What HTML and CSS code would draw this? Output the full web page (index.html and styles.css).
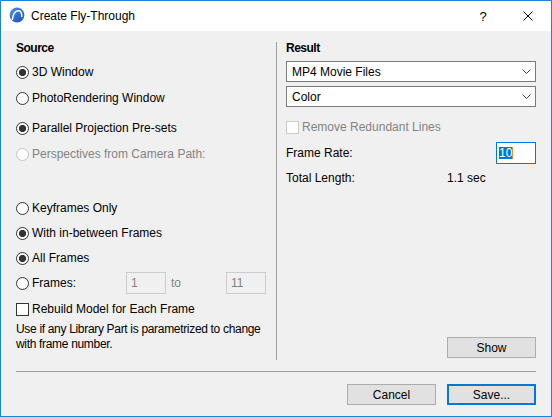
FILE: index.html
```html
<!DOCTYPE html>
<html lang="en">
<head>
<meta charset="utf-8">
<title>Create Fly-Through</title>
<link rel="stylesheet" href="styles.css">
</head>
<body>
<div class="window">
  <div class="titlebar">
    <svg class="app-icon" viewBox="0 0 16 16" width="16" height="16">
      <defs>
        <linearGradient id="g" x1="0" y1="0" x2="1" y2="1">
          <stop offset="0" stop-color="#4a93ea"/>
          <stop offset="1" stop-color="#1a4fb4"/>
        </linearGradient>
      </defs>
      <circle cx="8" cy="8" r="7.4" fill="url(#g)"/>
      <path d="M3.4 12.4 C4 7.2 6.4 4 9.4 3.8 C11.8 3.7 13 6 12.8 9.6" fill="none" stroke="#fff" stroke-width="1.5" stroke-linecap="round"/>
    </svg>
    <span class="title">Create Fly-Through</span>
    <span class="cap-btn help">?</span>
    <span class="cap-btn close">
      <svg viewBox="0 0 10 10" width="10" height="10"><path d="M0.5 0.5 L9.5 9.5 M9.5 0.5 L0.5 9.5" stroke="#000" stroke-width="1" fill="none"/></svg>
    </span>
  </div>

  <div class="body">
    <div class="panes">
      <div class="pane">
        <div class="group-title">Source</div>
        <div class="opt src-first"><span class="radio on"></span>3D Window</div>
        <div class="opt src-next"><span class="radio"></span>PhotoRendering Window</div>
        <div class="opt view-first"><span class="radio on"></span>Parallel Projection Pre-sets</div>
        <div class="opt src-next disabled"><span class="radio"></span>Perspectives from Camera Path:</div>
        <div class="opt frames-first"><span class="radio"></span>Keyframes Only</div>
        <div class="opt frames-next"><span class="radio on"></span>With in-between Frames</div>
        <div class="opt frames-next"><span class="radio on"></span>All Frames</div>
        <div class="opt range-row">
          <span class="range-label"><span class="radio"></span>Frames:</span>
          <span class="field disabled-field">1</span>
          <span class="to">to</span>
          <span class="field disabled-field">11</span>
        </div>
        <div class="opt rebuild"><span class="check"></span>Rebuild Model for Each Frame</div>
        <p class="note">Use if any Library Part is parametrized to change<br>with frame number.</p>
      </div>

      <div class="vsep"></div>

      <div class="pane">
        <div class="group-title">Result</div>
        <div class="select first">MP4 Movie Files
          <svg class="chev" viewBox="0 0 9 5" width="9" height="5"><path d="M0.5 0.5 L4.5 4.5 L8.5 0.5" fill="none" stroke="#444" stroke-width="1"/></svg>
        </div>
        <div class="select next">Color
          <svg class="chev" viewBox="0 0 9 5" width="9" height="5"><path d="M0.5 0.5 L4.5 4.5 L8.5 0.5" fill="none" stroke="#444" stroke-width="1"/></svg>
        </div>
        <div class="opt redundant disabled"><span class="check"></span>Remove Redundant Lines</div>
        <div class="opt rate-row">
          <span>Frame Rate:</span>
          <span class="rate-input"><span class="sel">10</span><span class="caret"></span></span>
        </div>
        <div class="opt length-row">
          <span class="length-label">Total Length:</span>
          <span>1.1 sec</span>
        </div>
        <button class="btn show">Show</button>
      </div>
    </div>

    <div class="hsep"></div>

    <div class="actions">
      <button class="btn cancel">Cancel</button>
      <button class="btn primary">Save...</button>
    </div>
  </div>
</div>
</body>
</html>
```

FILE: styles.css
```css
* {
  box-sizing: border-box;
  margin: 0;
  padding: 0;
}

body {
  margin: 0;
  font-family: "Liberation Sans", Arial, sans-serif;
  font-size: 12px;
  color: #000;
  background: #fff;
}

.window {
  width: 552px;
  height: 417px;
  border: 1px solid #1883d7;
  background: #f0f0f0;
  display: flex;
  flex-direction: column;
}

/* Title bar */
.titlebar {
  height: 30px;
  flex: none;
  background: #fff;
  display: flex;
  align-items: center;
}

.app-icon {
  margin-left: 8px;
  margin-bottom: 2px;
  flex: none;
}

.title {
  margin-left: 6px;
}

.cap-btn {
  width: 46px;
  height: 30px;
  display: flex;
  align-items: center;
  justify-content: center;
}

.help {
  margin-left: auto;
  font-size: 13px;
  padding-left: 2px;
}

/* Body */
.body {
  flex: 1;
  padding: 0 15px 11px;
  display: flex;
  flex-direction: column;
}

.panes {
  height: 329px;
  display: flex;
  flex: none;
}

.pane {
  width: 250px;
  padding-top: 7px;
  display: flex;
  flex-direction: column;
}

.vsep {
  width: 1px;
  background: #a0a0a0;
  margin: 11px 9px 0 10px;
}

.group-title {
  height: 20px;
  line-height: 20px;
  font-weight: bold;
  letter-spacing: -0.5px;
}

.opt {
  height: 20px;
  display: flex;
  align-items: center;
  gap: 3px;
  white-space: nowrap;
}

.opt.disabled {
  color: #838383;
}

.src-first { margin-top: 4px; }
.src-next { margin-top: 6px; }
.view-first { margin-top: 10px; }
.frames-first { margin-top: 34px; }
.frames-next { margin-top: 5px; }

.range-row {
  height: 22px;
  margin-top: 4px;
  gap: 0;
}

.range-label {
  width: 110px;
  display: flex;
  align-items: center;
  gap: 3px;
}

.to {
  width: 60px;
  padding-left: 5px;
  color: #838383;
}

.field {
  width: 40px;
  height: 22px;
  display: flex;
  align-items: center;
  padding-left: 4px;
}

.disabled-field {
  border: 1px solid #cccccc;
  background: #f0f0f0;
  color: #838383;
}

.rebuild { margin-top: 5px; }

.note {
  margin-top: 3px;
  line-height: 15px;
  white-space: nowrap;
  letter-spacing: -0.32px;
}

/* Controls */
.radio {
  width: 13px;
  height: 13px;
  flex: none;
  border: 1px solid #333;
  border-radius: 50%;
  background: #fff;
}

.radio.on {
  background: radial-gradient(circle, #333 0, #333 3.3px, #fff 3.9px);
}

.disabled .radio {
  border-color: #c4c4c4;
}

.check {
  width: 13px;
  height: 13px;
  flex: none;
  border: 1px solid #333;
  background: #fff;
}

.disabled .check {
  border-color: #cccccc;
}

.select {
  height: 21px;
  border: 1px solid #7a7a7a;
  background: #fff;
  display: flex;
  align-items: center;
  padding-left: 5px;
}

.select.first { margin-top: 3px; }
.select.next { margin-top: 4px; }

.chev {
  margin-left: auto;
  margin-right: 4px;
}

.redundant { margin-top: 10px; }

.rate-row {
  height: 22px;
  margin-top: 5px;
}

.rate-input {
  margin-left: auto;
  width: 40px;
  height: 22px;
  border: 1px solid #0078d7;
  background: #fff;
  display: flex;
  align-items: center;
  padding-left: 2px;
}

.sel {
  background: #0078d7;
  color: #fff;
  line-height: 12px;
}

.caret {
  width: 1px;
  height: 12px;
  background: #f08a24;
}

.length-row {
  margin-top: 4px;
  gap: 0;
}

.length-label {
  width: 161px;
}

.btn {
  width: 89px;
  height: 21px;
  border: 1px solid #adadad;
  background: #e1e1e1;
  font: inherit;
  color: #000;
}

.show {
  margin-top: auto;
  margin-bottom: 2px;
  align-self: flex-end;
}

.hsep {
  height: 1px;
  background: #a0a0a0;
  margin-top: 11px;
  flex: none;
}

.actions {
  margin-top: 12px;
  display: flex;
  justify-content: flex-end;
  gap: 11px;
}

.primary {
  border: 2px solid #0078d7;
}
```
